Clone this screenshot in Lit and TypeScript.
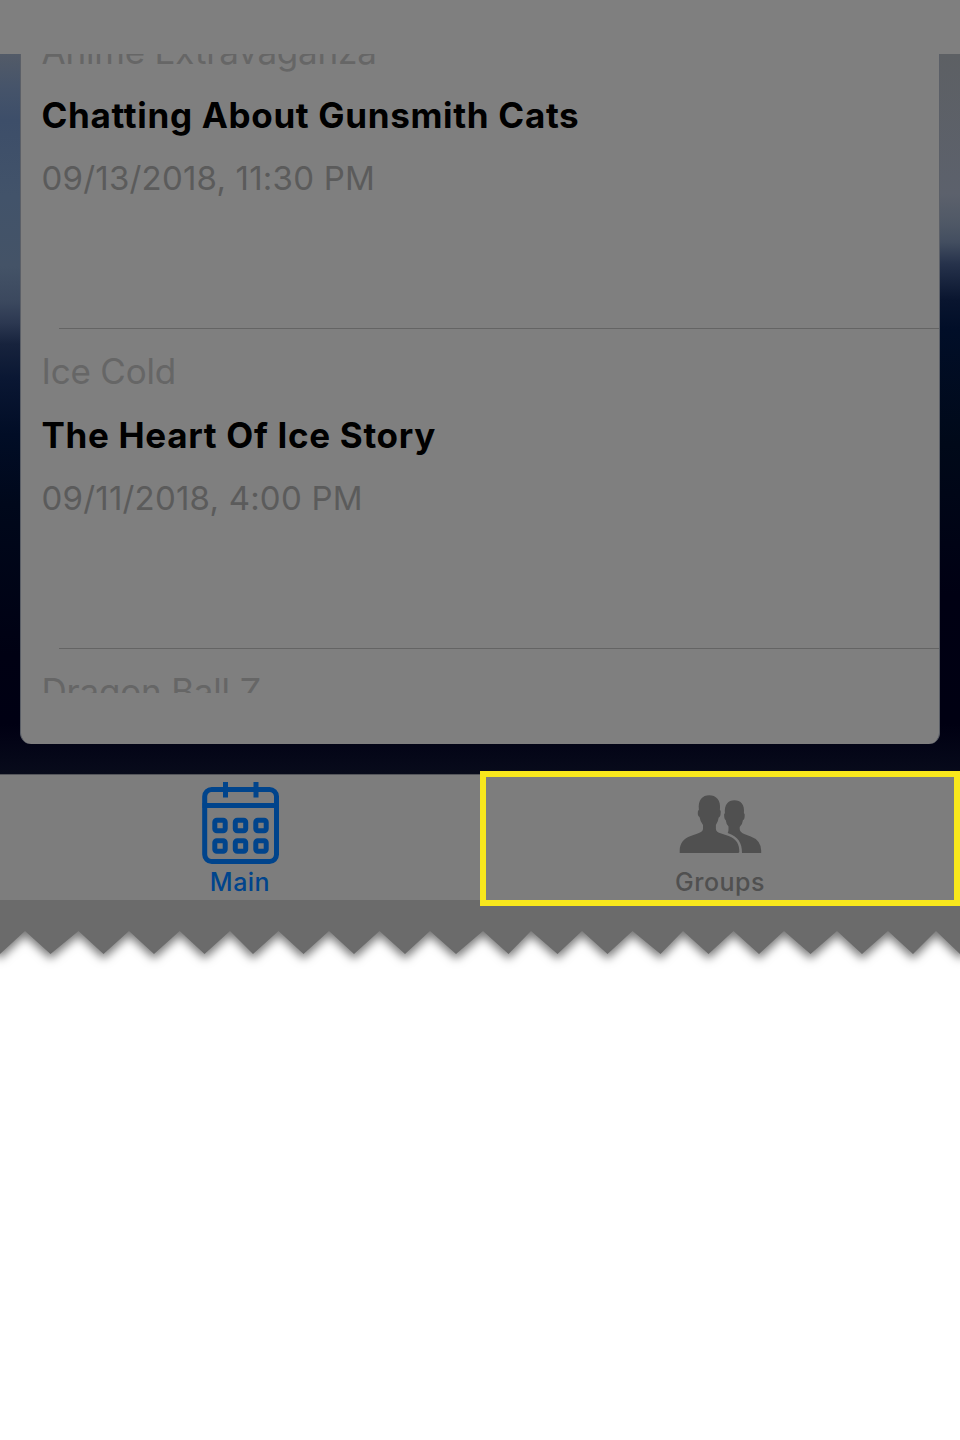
import { LitElement, html, css, svg } from "lit";
import { customElement, property } from "lit/decorators.js";

@customElement("event-row")
class EventRow extends LitElement {
  @property() group = "";
  @property() heading = "";
  @property() date = "";

  static styles = css`
    :host { display: block; height: 320px; box-sizing: border-box; padding: 11px 0 0 20.5px; position: relative; white-space: nowrap; }
    :host::after { content: ""; position: absolute; left: 38px; right: 0; bottom: 0; height: 1px; background: #646464; }
    div { height: 63px; line-height: 63px; }
    .group { color: #666; font-size: 35px; letter-spacing: -0.2px; }
    .heading { color: #000; font-size: 35px; font-weight: 700; letter-spacing: 0.68px; padding-top: 1px; }
    .date { color: #5b5b5b; font-size: 33px; letter-spacing: 0.2px; }
  `;

  render() {
    return html`<div class="group">${this.group}</div>
      <div class="heading">${this.heading}</div>
      <div class="date">${this.date}</div>`;
  }
}

const calendarIcon = svg`
  <g fill="none" stroke="#00448c" stroke-width="5">
    <rect x="4.700" y="7.500" width="71.800" height="72" rx="7"/>
    <path d="M2.500 23.500H79M25.500 0V15.500M56 0V15.500"/>
    ${[20, 40.5, 61].map((x) => [43.5, 64].map((y) => svg`<rect x=${x - 5.2} y=${y - 5.2} width="10.4" height="10.4" rx="2"/>`))}
  </g>`;

const peopleIcon = svg`
  <g fill="#505050" transform="translate(0.7 0.4)">
    <path d="M20 60.600V58C20 51 24 46 31 43.500L38 41Q43.300 39 43.300 36.500V32.500Q40.500 29 39.800 24.500Q37.700 23.500 38.200 19Q38.300 17.500 39.200 17.500C38 7 43 2.800 49.500 2.800C56 2.800 61.500 7 60.200 17.500Q61.300 17.700 61 20Q60.800 24.500 59 25Q58.500 29 56.200 32.500V36.500Q56.300 39.500 61.500 41L69 43.700C77 47 79.800 52 79.600 59.600Q79.600 60.600 78 60.600Z"/>
    <path d="M82.300 60.600C82.300 50 78.500 44.500 68 40.500Q69 39.500 68.800 36V34Q66.500 31.500 66 27.500Q64.500 27 64.400 22Q64.500 21 65.200 20.800C64.500 12 68.500 7.800 74.700 7.800C81 7.800 85.200 12 84.200 20.800Q85.200 21 85 23Q84.800 27.500 83.300 27.500Q82.800 32 80 34.500V36.500Q80 39.500 84.500 41.500L91 44Q101 47.500 101.500 58V60.600Z"/>
  </g>`;

@customElement("app-root")
class AppRoot extends LitElement {
  static styles = css`
    :host { display: block; width: 960px; height: 1440px; background: #fff; font-family: Inter, "Liberation Sans", sans-serif; overflow: hidden; }
    .header { height: 54px; background: #7f7f7f; }
    .stage { height: 720px; box-sizing: border-box; padding: 0 20px 30px; display: flex;
      background:
        linear-gradient(#5d6064 0, #5c616c 140px, #4f5866 170px, #434e60 188px, #26324b 210px, #09152f 246px, #010e28 275px, #000919 390px, #000013 540px, #000012 670px, #070a1b 720px) right / 20px 100% no-repeat,
        linear-gradient(#535b68 0, #46546a 33px, #3d4e69 66px, #42536a 142px, #445367 212px, #3b485e 248px, #2c3851 269px, #17233d 290px, #0a1733 325px, #010d26 380px, #00081b 450px, #000113 600px, #000013 670px, #080b1b 720px); }
    .card { flex: 1; box-sizing: border-box; border: 1px solid #5b5f67; border-top: 0; border-bottom: 0; background: #7f7f7f; border-radius: 0 0 11px 11px; overflow: hidden; }
    .list { height: 639px; overflow: hidden; }
    event-row:first-child { margin-top: -45px; }
    .tabs { height: 126px; display: grid; grid-template-columns: 1fr 1fr; background: #7d7d7d; box-shadow: inset 0 1px #54555a; position: relative; z-index: 1; }
    .tab { display: flex; flex-direction: column; align-items: center; box-sizing: border-box; font-size: 25px; font-weight: 500; line-height: 30px; letter-spacing: 0.5px; color: #505050; }
    .main { padding-top: 8px; color: #00448c; }
    .groups { padding-top: 18px; }
    svg { display: block; overflow: visible; }
    .main svg { margin-bottom: 2.5px; }
    .groups svg { margin-bottom: 12.5px; }
    .focus { position: absolute; left: 480px; top: -3px; width: 480px; height: 135px; box-sizing: border-box; border: 6px solid #f8e71c; }
    .tear { filter: drop-shadow(0 5px 5px rgba(0, 0, 0, 0.53)); }
  `;

  render() {
    return html`
      <div class="header"></div>
      <div class="stage">
        <div class="card"><div class="list">
          <event-row group="Anime Extravaganza" heading="Chatting About Gunsmith Cats" date="09/13/2018, 11:30 PM"></event-row>
          <event-row group="Ice Cold" heading="The Heart Of Ice Story" date="09/11/2018, 4:00 PM"></event-row>
          <event-row group="Dragon Ball Z"></event-row>
        </div></div>
      </div>
      <div class="tabs">
        <div class="tab main"><svg width="80" height="82" viewBox="0 0 80 82">${calendarIcon}</svg><span>Main</span></div>
        <div class="tab groups"><svg width="122" height="62" viewBox="0 0 122 62">${peopleIcon}</svg><span>Groups</span></div>
        <div class="focus"></div>
      </div>
      <svg class="tear" width="960" height="80" viewBox="0 0 960 80">
        <path fill="#6b6b6b" d="M-40 0H1000V54L984 31L960 54L936 31L913 54L888 31L862 54L837 31L810.500 54L784 31L759 54L733.500 31L708.500 54L683 31L660.500 54L632.500 31L607.500 54L582 31L557.500 54L531 31L508.500 54L483 31L456 54L430 31L405 54L379.500 31L354 54L329 31L303.500 54L278.500 31L253 54L230 31L204.500 54L179.700 31L154 54L129 31L103.500 54L78.500 31L50.500 54L25 31L0 54L-25 31L-40 45Z"/>
      </svg>`;
  }
}
